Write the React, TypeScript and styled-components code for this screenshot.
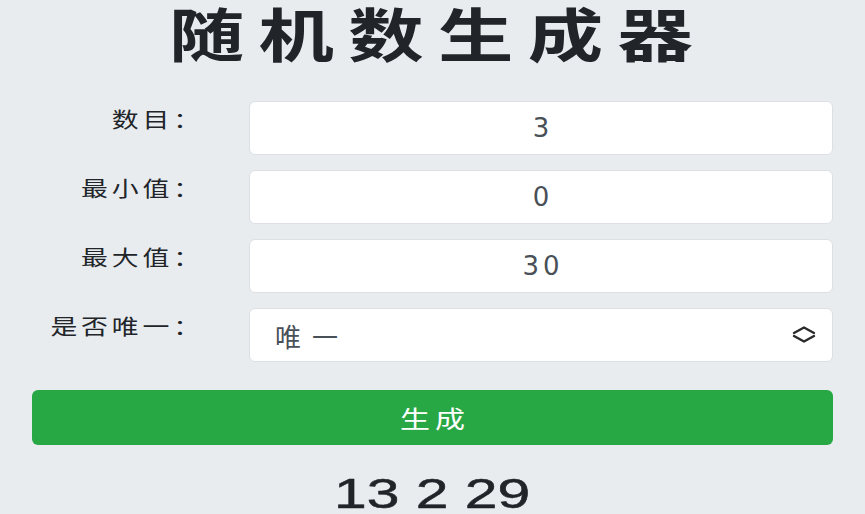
import styled, { createGlobalStyle } from "styled-components";

const GlobalStyle = createGlobalStyle`
  html, body {
    margin: 0;
    padding: 0;
    background: #e9ecef;
    font-family: "Noto Sans CJK SC", "Noto Sans", sans-serif;
    color: #212529;
  }
`;

const Page = styled.main`
  width: 801px;
  margin: 0 auto;
`;

// the screenshot is drawn with wide glyphs; this widens a run of text
const Wide = styled.span<{ $x?: number; $origin?: string }>`
  display: inline-block;
  transform: scaleX(${(p) => p.$x ?? 1.2});
  transform-origin: ${(p) => p.$origin ?? "center"};
  white-space: nowrap;
`;

const Title = styled.h1`
  margin: 0;
  height: 72px;
  line-height: 64px;
  padding-left: 11px;
  font-size: 58px;
  font-weight: 700;
  letter-spacing: 11px;
  text-align: center;
  color: #212529;
`;

const Form = styled.form`
  display: flex;
  flex-direction: column;
  gap: 15px;
  margin-top: 29px;
`;

const Row = styled.div`
  display: flex;
  align-items: flex-start;
  height: 54px;
`;

const Label = styled.label`
  width: 217px;
  flex: none;
  box-sizing: border-box;
  padding: 2px 45px 0 0;
  line-height: 30px;
  font-size: 21px;
  letter-spacing: 3px;
  text-align: right;
  color: #212529;
`;

const fieldBase = `
  flex: 1;
  height: 54px;
  box-sizing: border-box;
  margin: 0;
  background: #fff;
  border: 1px solid #dce0e4;
  border-radius: 6px;
  outline: none;
  color: #495057;
`;

const NumberInput = styled.input`
  ${fieldBase};
  padding: 0 0 0 4px;
  text-align: center;
  font-family: "DejaVu Sans", sans-serif;
  font-size: 26px;
  letter-spacing: 4px;
`;

const SelectWrap = styled.div`
  position: relative;
  flex: 1;
  display: flex;
`;

const Select = styled.select`
  ${fieldBase};
  appearance: none;
  padding: 0 0 0 25px;
  font-family: "Noto Sans CJK SC", sans-serif;
  font-size: 26px;
  letter-spacing: 11px;
`;

const Chevrons = styled.svg`
  position: absolute;
  right: 17px;
  top: 17px;
  pointer-events: none;
`;

const GenerateButton = styled.button`
  display: block;
  width: 100%;
  height: 55px;
  margin-top: 28px;
  padding: 0 0 0 4px;
  border: none;
  border-radius: 6px;
  background: #28a745;
  color: #fff;
  font-family: "Noto Sans CJK SC", sans-serif;
  font-size: 24px;
  letter-spacing: 4px;
`;

const Result = styled.div`
  margin-top: 28px;
  line-height: 42px;
  font-family: "Liberation Sans", Arial, sans-serif;
  font-size: 42px;
  text-align: center;
  color: #212529;
  -webkit-text-stroke: 0.5px #212529;
`;

const fields = [
  { label: "数目：", value: "3" },
  { label: "最小值：", value: "0" },
  { label: "最大值：", value: "30" },
];

export default function App() {
  return (
    <>
      <GlobalStyle />
      <Page>
        <Title>
          <Wide $x={1.3}>随机数生成器</Wide>
        </Title>
        <Form onSubmit={(e) => e.preventDefault()}>
          {fields.map((f) => (
            <Row key={f.label}>
              <Label>
                <Wide $x={1.28} $origin="right">{f.label}</Wide>
              </Label>
              <NumberInput type="text" defaultValue={f.value} />
            </Row>
          ))}
          <Row>
            <Label>
              <Wide $x={1.28} $origin="right">是否唯一：</Wide>
            </Label>
            <SelectWrap>
              <Select defaultValue="unique">
                <option value="unique">唯一</option>
                <option value="any">不唯一</option>
              </Select>
              <Chevrons width="24" height="19" viewBox="0 0 24 19">
                <path
                  d="M2 8 L12 2.5 L22 8 M2 11 L12 16.5 L22 11"
                  fill="none"
                  stroke="#2b2b2b"
                  strokeWidth="2.4"
                  strokeLinecap="round"
                  strokeLinejoin="round"
                />
              </Chevrons>
            </SelectWrap>
          </Row>
        </Form>
        <GenerateButton type="button">
          <Wide $x={1.25}>生成</Wide>
        </GenerateButton>
        <Result>
          <Wide $x={1.4}>13 2 29</Wide>
        </Result>
      </Page>
    </>
  );
}
